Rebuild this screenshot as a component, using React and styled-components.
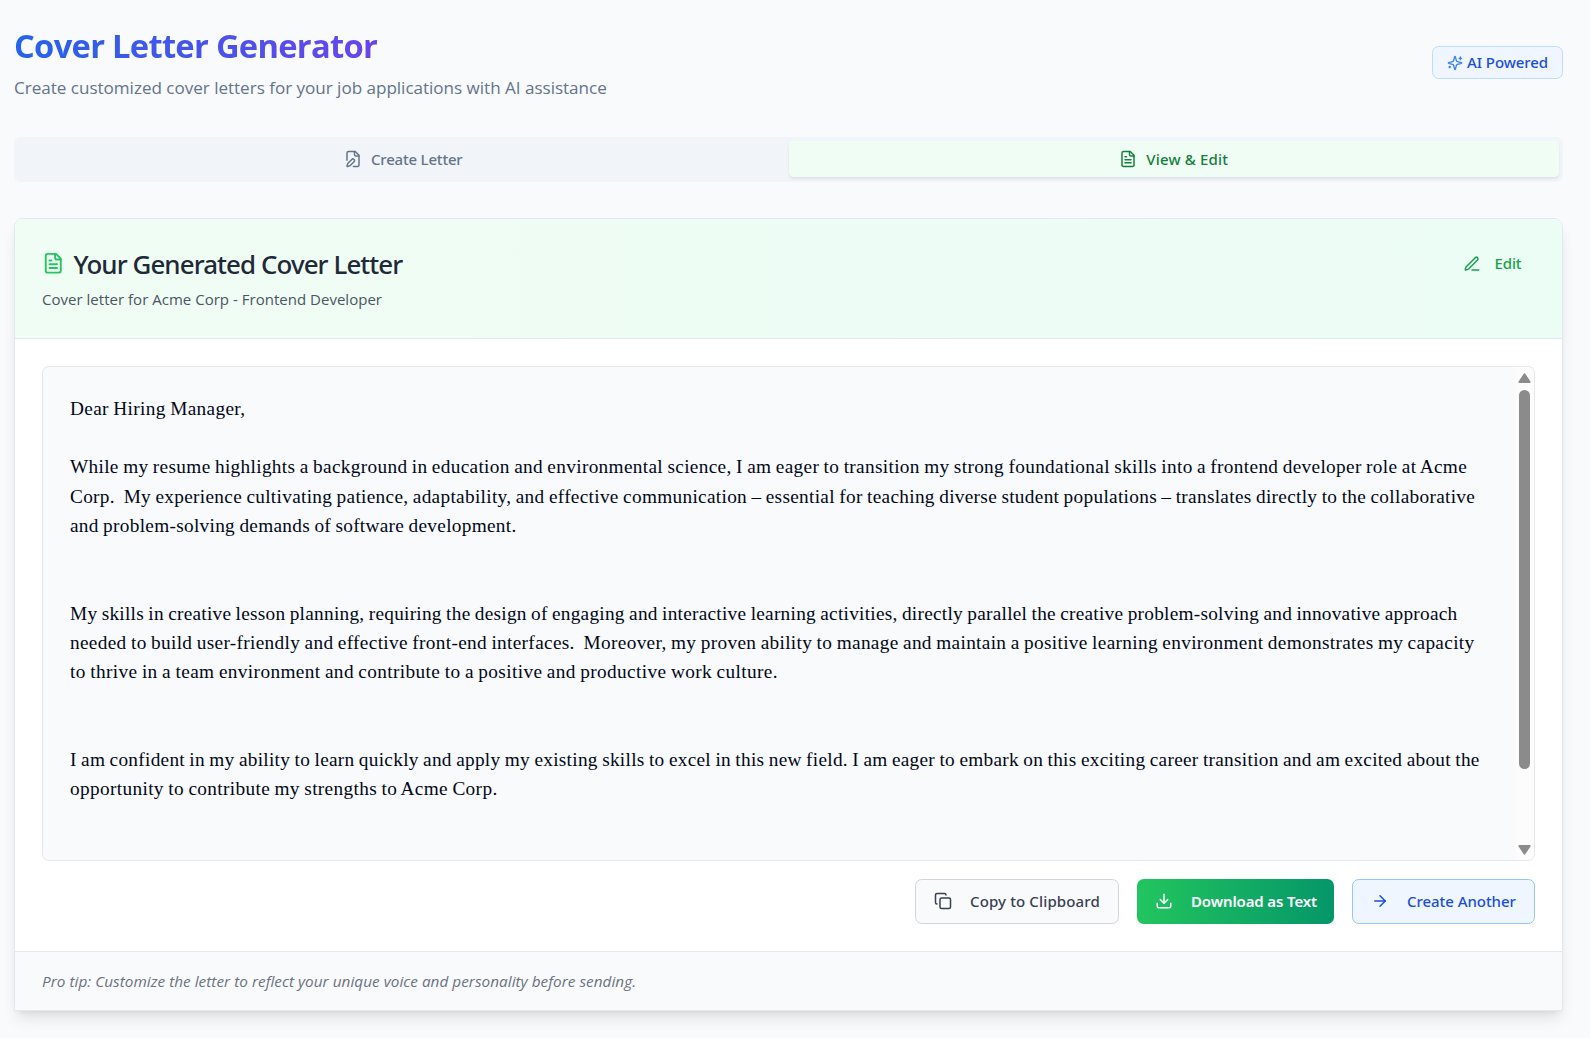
import React from "react";
import styled, { createGlobalStyle } from "styled-components";

const GlobalStyle = createGlobalStyle`
  *, *::before, *::after { box-sizing: border-box; }
  body {
    margin: 0;
    background: #f8fafc;
    color: #020817;
    font-family: "Open Sans", "Noto Sans", sans-serif;
  }
  h1, h2, p { margin: 0; }
  button { font: inherit; cursor: pointer; }
`;

const Page = styled.main`
  height: 1038px;
  padding: 22.5px 27px 0 14px;
  overflow: hidden;
`;

const PageHeader = styled.header`
  display: flex;
  align-items: center;
  justify-content: space-between;
  height: 80px;
  margin-bottom: 34.5px;
`;

const Heading = styled.div`
  display: flex;
  flex-direction: column;
  gap: 5px;
  width: 593px;
  padding-bottom: 2px;
`;

const PageTitle = styled.h1`
  font-size: 32.7px;
  font-weight: 700;
  line-height: 46px;
  letter-spacing: -0.71px;
  white-space: nowrap;
  color: transparent;
  background: linear-gradient(to right, #2563eb, #9333ea);
  background-clip: text;
  -webkit-background-clip: text;
`;

const Subtitle = styled.p`
  font-size: 17.1px;
  line-height: 27px;
  letter-spacing: -0.03px;
  white-space: nowrap;
  color: #64748b;
`;

const Label = styled.span`
  padding-bottom: 2px;
  font-family: "Noto Sans", sans-serif;
  font-size: 15px;
  font-weight: ${(p) => p.$weight || 500};
  letter-spacing: ${(p) => p.$track || 0}px;
  line-height: 22px;
  white-space: nowrap;
`;

const Badge = styled.div`
  display: flex;
  align-items: center;
  gap: 4px;
  height: 33px;
  padding: 0 14px;
  border: 1px solid #bfdbfe;
  border-radius: 6.75px;
  background: #eff6ff;
  color: #1d4ed8;
  svg { color: #3b82f6; }
`;

const TabList = styled.div`
  display: grid;
  grid-template-columns: 1fr 1fr;
  height: 44.5px;
  margin-bottom: 36.5px;
  padding: 4px 4px 4.5px;
  border-radius: 6.75px;
  background: #f1f5f9;
`;

const Tab = styled.button`
  display: flex;
  align-items: center;
  justify-content: center;
  gap: 9px;
  padding: 0.5px 0 0;
  border: 0;
  border-radius: 4.5px;
  background: ${(p) => (p.$active ? "#f0fdf4" : "transparent")};
  color: ${(p) => (p.$active ? "#15803d" : "#64748b")};
  box-shadow: ${(p) => (p.$active ? "0 2px 3px rgba(0,0,0,.08)" : "none")};
  ${Label} { padding-bottom: 1px; }
`;

const Card = styled.section`
  border: 1px solid #e2e8f0;
  border-radius: 9px 9px 0 0;
  background: #fff;
  box-shadow: 0 10px 15px -3px rgba(0, 0, 0, 0.1), 0 4px 6px -4px rgba(0, 0, 0, 0.1);
`;

const CardHeader = styled.div`
  display: flex;
  justify-content: space-between;
  align-items: flex-start;
  height: 120px;
  padding: 27px;
  border-bottom: 1px solid #e2e8f0;
  border-radius: 8px 8px 0 0;
  background: linear-gradient(to right, #f0fdf4, #ecfdf5);
`;

const TitleRow = styled.div`
  display: flex;
  align-items: center;
  gap: 9px;
  height: 35px;
  svg { color: #22c55e; }
`;

const CardTitle = styled.h2`
  padding-top: 1px;
  font-family: "Noto Sans", sans-serif;
  font-size: 25.9px;
  font-weight: 500;
  line-height: 36px;
  letter-spacing: -0.91px;
  color: #1f2937;
`;

const Description = styled.p`
  margin-top: 7px;
  font-size: 15px;
  line-height: 22px;
  letter-spacing: 0.02px;
  color: #4b5563;
`;

const EditButton = styled.button`
  display: flex;
  align-items: center;
  gap: 13px;
  height: 35px;
  padding: 0 13.5px;
  border: 0;
  background: transparent;
  color: #16a34a;
`;

const CardBody = styled.div`
  padding: 27px;
`;

const LetterBox = styled.div`
  display: flex;
  height: 495px;
  margin-bottom: 18px;
  border: 1px solid #e5e7eb;
  border-radius: 6.75px;
  background: #f8fafc;
  overflow: hidden;
`;

const Letter = styled.div`
  flex: 1;
  min-width: 0;
  padding: 26.9px 27px;
  font-family: "Liberation Serif", serif;
  font-size: 19.3px;
  word-spacing: -0.75px;
`;

const Line = styled.div`
  height: 29.25px;
  line-height: 29.25px;
  white-space: pre;
  letter-spacing: ${(p) => p.$track || 0}px;
`;

const ScrollTrack = styled.div`
  display: flex;
  flex-direction: column;
  align-items: center;
  width: 19px;
  padding: 6px 0 5px;
  background: #fcfcfc;
  color: #8b8b8b;
  svg { display: block; }
`;

const ScrollThumb = styled.div`
  width: 11px;
  height: 379px;
  margin: 7px 0 auto;
  border-radius: 6px;
  background: #8b8b8b;
`;

const Actions = styled.div`
  display: flex;
  justify-content: flex-end;
  gap: 18px;
`;

const tones = {
  neutral: "border: 1px solid #d1d5db; background: #f9fafb; color: #374151;",
  primary: "border: 0; background: linear-gradient(to right, #22c55e, #059669); color: #fff;",
  info: "border: 1px solid #93c5fd; background: #eff6ff; color: #1d4ed8;",
};

const ActionButton = styled.button`
  display: flex;
  align-items: center;
  gap: 18px;
  width: ${(p) => p.$width}px;
  height: 45px;
  padding: 0 18px 1px;
  border-radius: 6.75px;
  ${(p) => tones[p.$tone]}
  ${Label} { padding-bottom: 1px; }
`;

const CardFooter = styled.footer`
  display: flex;
  align-items: center;
  height: 59px;
  padding: 0 27px;
  border-top: 1px solid #e2e8f0;
  background: #f8fafc;
`;

const Tip = styled.p`
  font-size: 15.3px;
  font-style: italic;
  letter-spacing: 0.035px;
  color: #6b7280;
`;

const Svg = styled.svg`
  flex: none;
  fill: none;
  stroke: currentColor;
  stroke-width: 2;
  stroke-linecap: round;
  stroke-linejoin: round;
`;

const icons = {
  sparkles: [
    "M9.937 15.5A2 2 0 0 0 8.5 14.063l-6.135-1.582a.5.5 0 0 1 0-.962L8.5 9.936A2 2 0 0 0 9.937 8.5l1.582-6.135a.5.5 0 0 1 .963 0L14.063 8.5A2 2 0 0 0 15.5 9.937l6.135 1.581a.5.5 0 0 1 0 .964L15.5 14.063a2 2 0 0 0-1.437 1.437l-1.582 6.135a.5.5 0 0 1-.963 0z",
    "M20 3v4", "M22 5h-4", "M4 17v2", "M5 18H3",
  ],
  filePen: [
    "M12.5 22H18a2 2 0 0 0 2-2V7l-5-5H6a2 2 0 0 0-2 2v9.5",
    "M14 2v4a2 2 0 0 0 2 2h4",
    "M13.378 15.626a1 1 0 1 0-3.004-3.004l-5.01 5.012a2 2 0 0 0-.506.854l-.837 2.87a.5.5 0 0 0 .62.62l2.87-.837a2 2 0 0 0 .854-.506z",
  ],
  fileText: [
    "M15 2H6a2 2 0 0 0-2 2v16a2 2 0 0 0 2 2h12a2 2 0 0 0 2-2V7Z",
    "M14 2v4a2 2 0 0 0 2 2h4", "M10 9H8", "M16 13H8", "M16 17H8",
  ],
  penLine: [
    "M12 20h9",
    "M16.376 3.622a1 1 0 0 1 3.002 3.002L7.368 18.635a2 2 0 0 1-.855.506l-2.872.838a.5.5 0 0 1-.62-.62l.838-2.872a2 2 0 0 1 .506-.854z",
  ],
  copy: [
    "M10 8h10a2 2 0 0 1 2 2v10a2 2 0 0 1-2 2H10a2 2 0 0 1-2-2V10a2 2 0 0 1 2-2z",
    "M4 16c-1.1 0-2-.9-2-2V4c0-1.1.9-2 2-2h10c1.1 0 2 .9 2 2",
  ],
  download: ["M21 15v4a2 2 0 0 1-2 2H5a2 2 0 0 1-2-2v-4", "M7 10l5 5 5-5", "M12 15V3"],
  arrow: ["M5 12h14", "M12 5l7 7-7 7"],
};

const Icon = ({ name, size = 18 }) => (
  <Svg width={size} height={size} viewBox="0 0 24 24" aria-hidden="true">
    {icons[name].map((d) => <path key={d} d={d} />)}
  </Svg>
);

const letter = [
  ["Dear Hiring Manager,", 0.35],
  [""],
  ["While my resume highlights a background in education and environmental science, I am eager to transition my strong foundational skills into a frontend developer role at Acme", 0.33],
  ["Corp.  My experience cultivating patience, adaptability, and effective communication – essential for teaching diverse student populations – translates directly to the collaborative", 0.307],
  ["and problem-solving demands of software development.", 0.298],
  [""],
  [""],
  ["My skills in creative lesson planning, requiring the design of engaging and interactive learning activities, directly parallel the creative problem-solving and innovative approach", 0.264],
  ["needed to build user-friendly and effective front-end interfaces.  Moreover, my proven ability to manage and maintain a positive learning environment demonstrates my capacity", 0.33],
  ["to thrive in a team environment and contribute to a positive and productive work culture.", 0.377],
  [""],
  [""],
  ["I am confident in my ability to learn quickly and apply my existing skills to excel in this new field. I am eager to embark on this exciting career transition and am excited about the", 0.291],
  ["opportunity to contribute my strengths to Acme Corp.", 0.352],
];

export default function App() {
  return (
    <>
      <GlobalStyle />
      <Page>
        <PageHeader>
          <Heading>
            <PageTitle>Cover Letter Generator</PageTitle>
            <Subtitle>Create customized cover letters for your job applications with AI assistance</Subtitle>
          </Heading>
          <Badge>
            <Icon name="sparkles" size={16} />
            <Label $track={-0.08}>AI Powered</Label>
          </Badge>
        </PageHeader>

        <TabList role="tablist">
          <Tab role="tab">
            <Icon name="filePen" />
            <Label $track={-0.2}>Create Letter</Label>
          </Tab>
          <Tab role="tab" $active>
            <Icon name="fileText" />
            <Label $track={0.16}>View &amp; Edit</Label>
          </Tab>
        </TabList>

        <Card>
          <CardHeader>
            <div>
              <TitleRow>
                <Icon name="fileText" size={22.5} />
                <CardTitle>Your Generated Cover Letter</CardTitle>
              </TitleRow>
              <Description>Cover letter for Acme Corp - Frontend Developer</Description>
            </div>
            <EditButton>
              <Icon name="penLine" />
              <Label $track={-0.1}>Edit</Label>
            </EditButton>
          </CardHeader>

          <CardBody>
            <LetterBox>
              <Letter>
                {letter.map(([text, track], i) => (
                  <Line key={i} $track={track}>{text}</Line>
                ))}
              </Letter>
              <ScrollTrack>
                <svg width="13" height="10" viewBox="0 0 13 10">
                  <path d="M6.5 1.2 11.7 9H1.3z" fill="currentColor" stroke="currentColor" strokeWidth="1.8" strokeLinejoin="round" />
                </svg>
                <ScrollThumb />
                <svg width="13" height="10" viewBox="0 0 13 10">
                  <path d="M6.5 8.8 11.7 1H1.3z" fill="currentColor" stroke="currentColor" strokeWidth="1.8" strokeLinejoin="round" />
                </svg>
              </ScrollTrack>
            </LetterBox>
            <Actions>
              <ActionButton $tone="neutral" $width={204}>
                <Icon name="copy" />
                <Label $track={0.13}>Copy to Clipboard</Label>
              </ActionButton>
              <ActionButton $tone="primary" $width={197}>
                <Icon name="download" />
                <Label $weight={600} $track={-0.128}>Download as Text</Label>
              </ActionButton>
              <ActionButton $tone="info" $width={183}>
                <Icon name="arrow" />
                <Label $track={-0.05}>Create Another</Label>
              </ActionButton>
            </Actions>
          </CardBody>

          <CardFooter>
            <Tip>Pro tip: Customize the letter to reflect your unique voice and personality before sending.</Tip>
          </CardFooter>
        </Card>
      </Page>
    </>
  );
}
